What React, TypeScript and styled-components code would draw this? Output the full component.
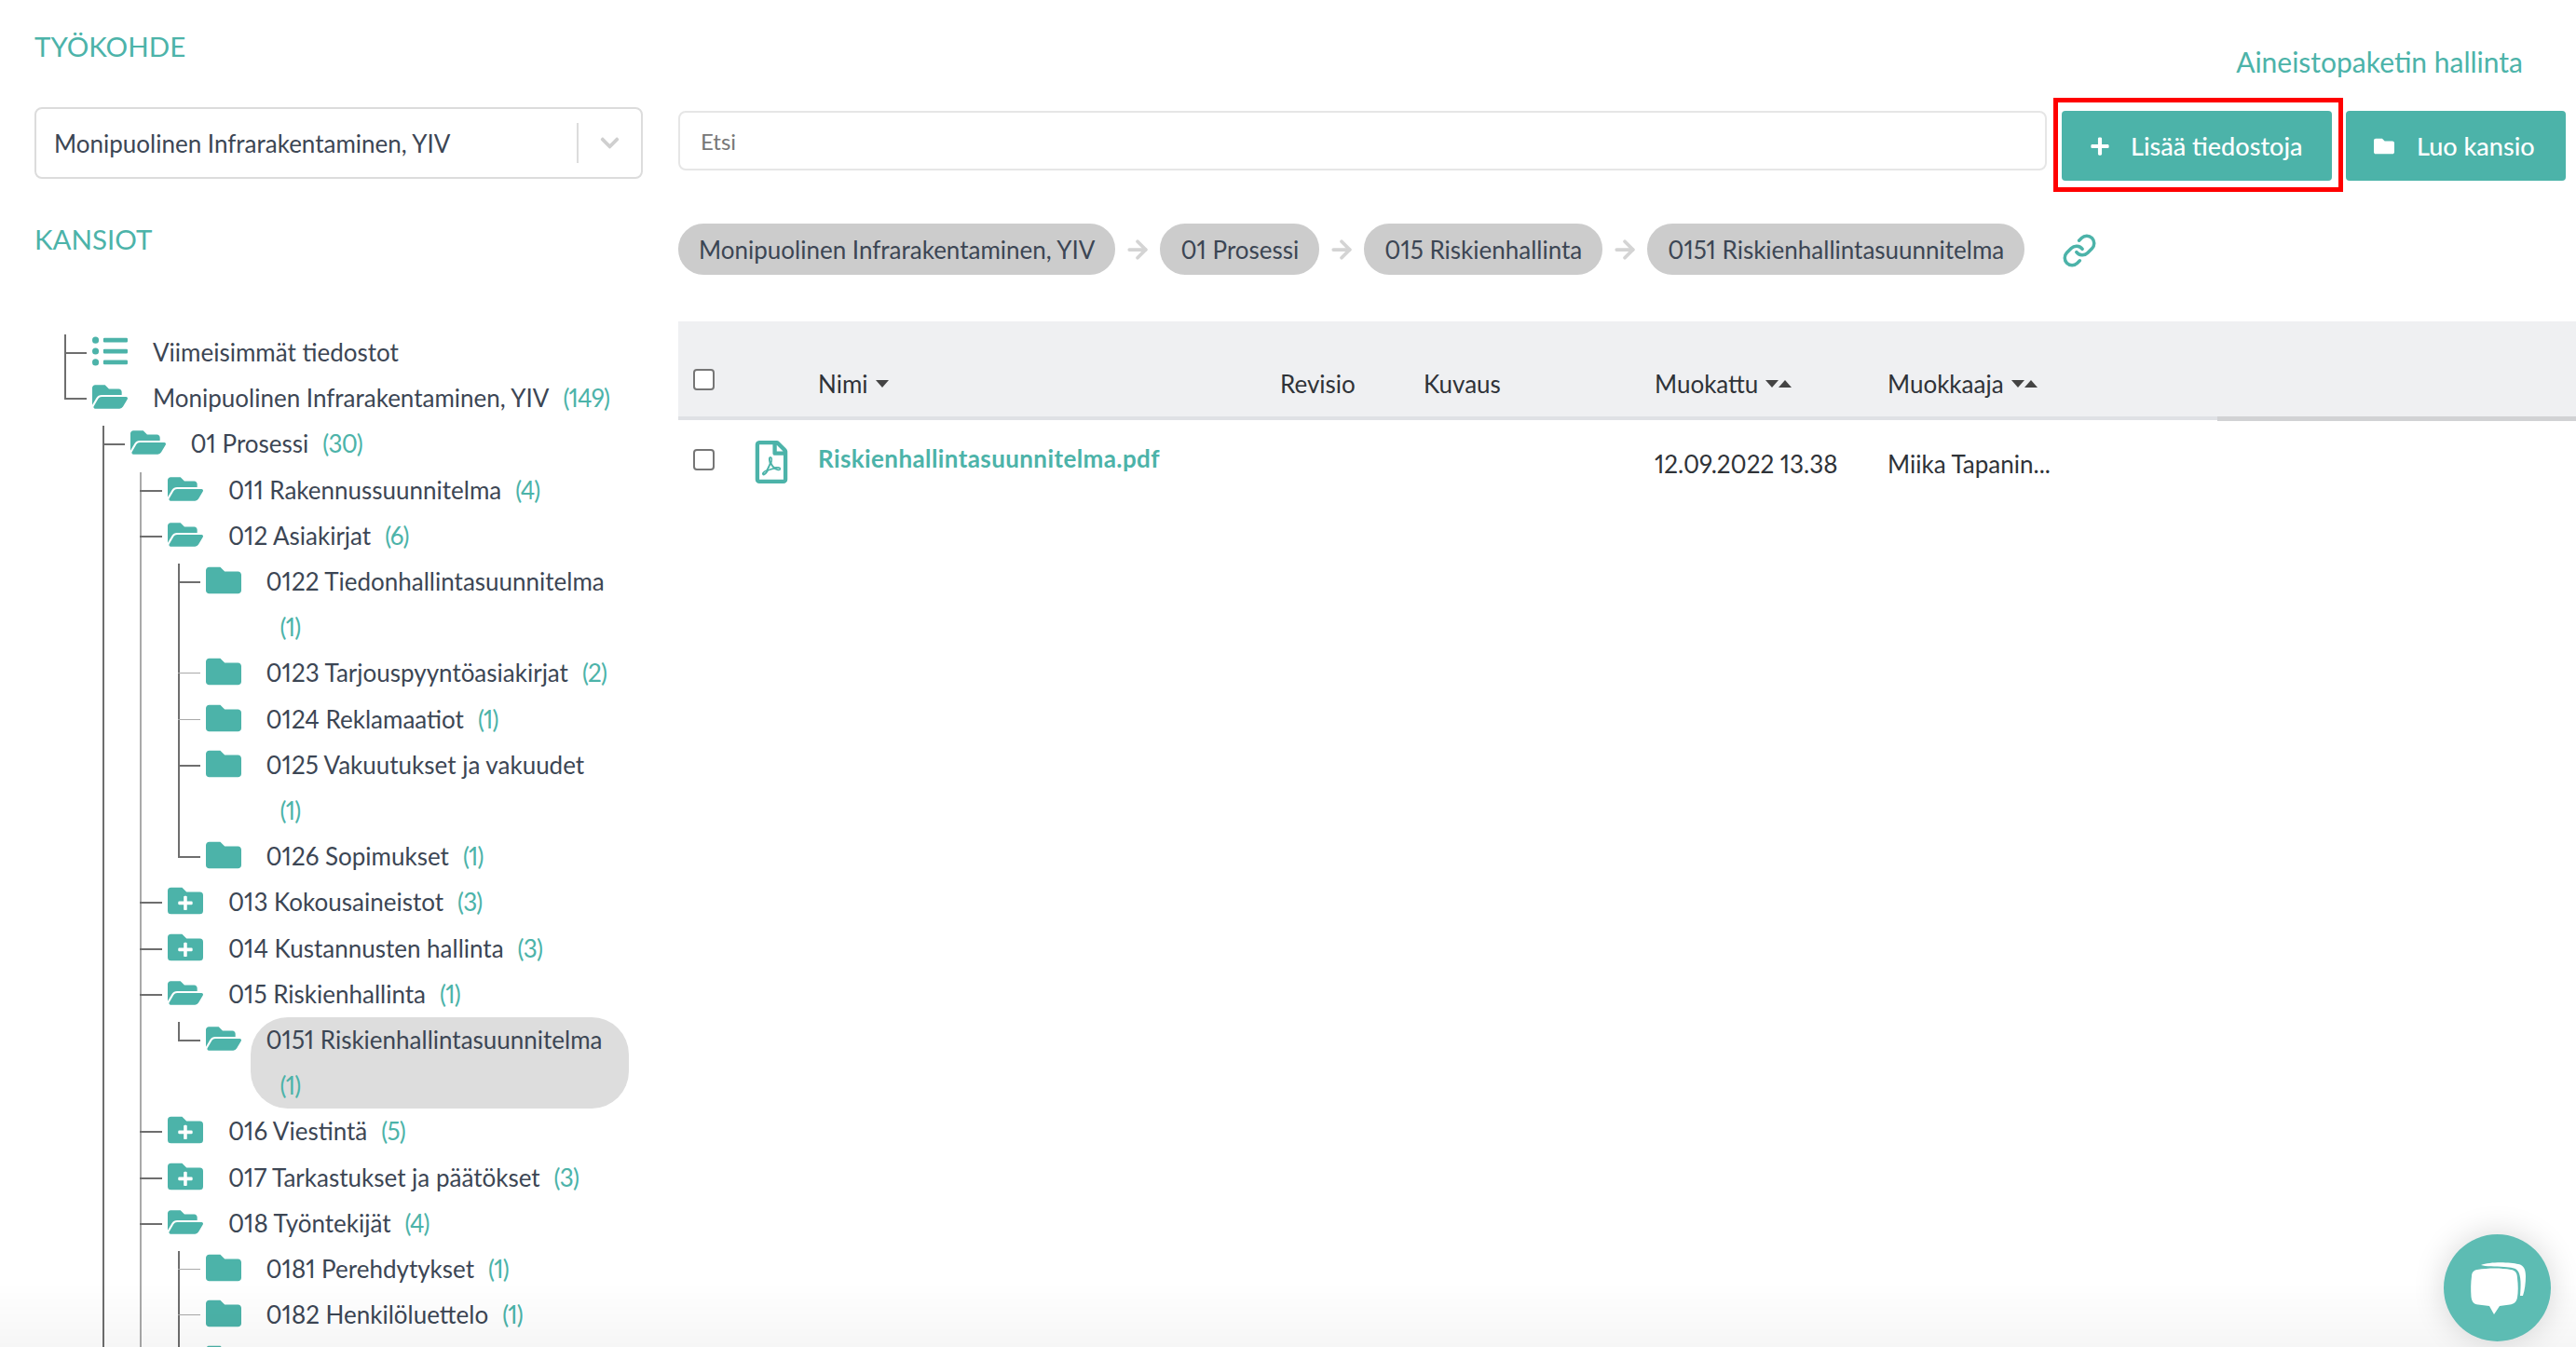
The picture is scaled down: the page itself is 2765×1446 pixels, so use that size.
import React from 'react'
import styled, { createGlobalStyle } from 'styled-components'
import { FaChevronDown, FaFolder, FaFolderOpen, FaFolderPlus, FaListUl, FaPlus, FaRegFilePdf } from 'react-icons/fa'
import { ArrowRight, Link } from 'lucide-react'

const Teal = '#4cb3a9'
const Ink = '#3c4654'

type IconKind = 'list' | 'open' | 'closed' | 'plus'

interface ITreeNode {
    icon: IconKind
    label?: string
    count?: number
    selected?: boolean
    thin?: boolean
    // the vertical line stops at this row; rows cut off by the window keep it going
    end?: boolean
    children?: ITreeNode[]
}

const tree: ITreeNode[] = [
    { icon: 'list', label: 'Viimeisimmät tiedostot' },
    {
        icon: 'open', label: 'Monipuolinen Infrarakentaminen, YIV', count: 149, end: true,
        children: [
            {
                icon: 'open', label: '01 Prosessi', count: 30,
                children: [
                    { icon: 'open', label: '011 Rakennussuunnitelma', count: 4 },
                    {
                        icon: 'open', label: '012 Asiakirjat', count: 6,
                        children: [
                            { icon: 'closed', label: '0122 Tiedonhallintasuunnitelma', count: 1 },
                            { icon: 'closed', label: '0123 Tarjouspyyntöasiakirjat', count: 2, thin: true },
                            { icon: 'closed', label: '0124 Reklamaatiot', count: 1, thin: true },
                            { icon: 'closed', label: '0125 Vakuutukset ja vakuudet', count: 1 },
                            { icon: 'closed', label: '0126 Sopimukset', count: 1, end: true },
                        ],
                    },
                    { icon: 'plus', label: '013 Kokousaineistot', count: 3 },
                    { icon: 'plus', label: '014 Kustannusten hallinta', count: 3 },
                    {
                        icon: 'open', label: '015 Riskienhallinta', count: 1,
                        children: [
                            { icon: 'open', label: '0151 Riskienhallintasuunnitelma', count: 1, selected: true, end: true },
                        ],
                    },
                    { icon: 'plus', label: '016 Viestintä', count: 5 },
                    { icon: 'plus', label: '017 Tarkastukset ja päätökset', count: 3 },
                    {
                        icon: 'open', label: '018 Työntekijät', count: 4,
                        children: [
                            { icon: 'closed', label: '0181 Perehdytykset', count: 1, thin: true },
                            { icon: 'closed', label: '0182 Henkilöluettelo', count: 1, thin: true },
                            { icon: 'closed' },
                        ],
                    },
                ],
            },
        ],
    },
]

const crumbs = [
    'Monipuolinen Infrarakentaminen, YIV',
    '01 Prosessi',
    '015 Riskienhallinta',
    '0151 Riskienhallintasuunnitelma',
]

const GlobalStyle = createGlobalStyle`
    html, body {
        margin: 0;
        height: 100%;
        overflow: hidden;
        background: #fff;
        font-family: "Lato", "Open Sans", sans-serif;
        font-variant-numeric: proportional-nums;
        color: ${Ink};
    }
    * {
        box-sizing: border-box;
    }
`

const Page = styled.div`
    display: flex;
    height: 100vh;
    overflow: hidden;
`

const Sidebar = styled.aside`
    flex: 0 0 728px;
    padding: 30px 0 0 37px;
`

const SectionTitle = styled.h2`
    margin: 0;
    height: 40px;
    font-size: 29.5px;
    line-height: 40px;
    font-weight: 400;
    color: ${Teal};
`

const Select = styled.div`
    display: flex;
    align-items: center;
    width: 653px;
    height: 77px;
    margin: 45px 0 45px;
    padding-left: 19px;
    border: 2px solid #dcdcdc;
    border-radius: 8px;
    font-size: 26px;
`

const SelectValue = styled.span`
    flex: 1;
`

const SelectArrow = styled.span`
    display: flex;
    align-items: center;
    justify-content: center;
    width: 69px;
    height: 43px;
    border-left: 2px solid #dcdcdc;
    color: #cfcfcf;
    font-size: 23px;
`

const Tree = styled.ul`
    list-style: none;
    width: 606px;
    margin: 77px 0 0 32px;
    padding: 0;
`

const SubTree = styled.ul`
    list-style: none;
    margin: 0;
    padding: 0 0 0 40.5px;
`

const TreeItem = styled.li<{ $depth: number, $thin?: boolean, $end?: boolean }>`
    position: relative;

    &::before {
        content: '';
        position: absolute;
        left: 0;
        top: 0;
        bottom: ${(props) => props.$end ? 'calc(100% - 25px)' : '0'};
        width: 2px;
        background: ${(props) => props.$depth === 2 ? '#a9a9a9' : '#6e6e6e'};
    }
    &:first-child::before {
        top: 5px;
    }
    &::after {
        content: '';
        position: absolute;
        left: 0;
        top: 24px;
        width: 24px;
        height: ${(props) => props.$thin ? '1px' : '2px'};
        background: ${(props) => props.$thin ? '#a9a9a9' : '#6e6e6e'};
    }
`

const TreeRow = styled.div`
    display: flex;
    padding-left: 30px;
`

const TreeIcon = styled.span`
    display: flex;
    flex: 0 0 48px;
    align-items: center;
    height: 46px;
    color: ${Teal};
    font-size: 38px;
    svg {
        display: block;
    }
`

const TreeLabel = styled.div<{ $selected?: boolean }>`
    flex: 1;
    padding: 0 15px 0 17px;
    font-size: 26px;
    line-height: 49.2px;
    border-radius: 40px;
    background: ${(props) => props.$selected ? '#dddddd' : 'transparent'};
`

const Count = styled.span`
    display: inline-block;
    margin-left: 15px;
    color: ${Teal};
    letter-spacing: -0.8px;
    white-space: nowrap;
`

const Main = styled.main`
    flex: 1;
    min-width: 0;
    padding-top: 46px;
`

const ManageLink = styled.a`
    display: block;
    margin-right: 57px;
    font-size: 30px;
    line-height: 40px;
    text-align: right;
    color: ${Teal};
`

const Toolbar = styled.div`
    display: flex;
    align-items: flex-start;
    gap: 15px;
    margin-top: 33px;
    padding-right: 11px;
`

const SearchInput = styled.input`
    flex: 1;
    min-width: 0;
    height: 64px;
    margin-right: 1px;
    padding: 0 22px;
    border: 2px solid #e6e6e6;
    border-radius: 8px;
    font-family: inherit;
    font-size: 24px;
    color: ${Ink};
    outline: none;
    &::placeholder {
        color: #777;
        opacity: 1;
    }
`

const Highlighted = styled.div`
    position: relative;
    &::after {
        content: '';
        position: absolute;
        inset: -14px -12px -12px -9px;
        border: 5px solid #ff0000;
        pointer-events: none;
    }
`

const ActionButton = styled.button<{ $width: number, $gap: number }>`
    display: flex;
    align-items: center;
    gap: ${(props) => props.$gap}px;
    width: ${(props) => props.$width}px;
    height: 75px;
    padding: 0 0 0 30px;
    border: 0;
    border-radius: 4px;
    background: ${Teal};
    color: #fff;
    font-family: inherit;
    font-size: 27px;
    font-weight: 500;
    svg {
        flex: none;
        font-size: 22px;
    }
`

const Breadcrumbs = styled.nav`
    display: flex;
    align-items: center;
    margin-top: 46px;
`

const Crumb = styled.span`
    display: flex;
    align-items: center;
    height: 55px;
    padding: 0 22px;
    border-radius: 27px;
    background: #cccccc;
    font-size: 26px;
    white-space: nowrap;
`

const CrumbArrow = styled.span`
    display: flex;
    justify-content: center;
    width: 48px;
    color: #d4d4d4;
`

const CrumbLink = styled.span`
    display: flex;
    margin: 2px 0 0 40px;
    color: ${Teal};
`

const Columns = `
    display: grid;
    grid-template-columns: 83px 67px 496px 154px 248px 250px 1fr;
    font-size: 26px;
    line-height: 40px;
    color: #2f3338;
`

const TableHead = styled.div`
    ${Columns}
    position: relative;
    height: 106px;
    margin-top: 50px;
    padding-top: 47px;
    align-items: center;
    align-content: start;
    background: #eff0f2;
    border-bottom: 4px solid #dfe1e5;

    &::after {
        content: '';
        position: absolute;
        right: 0;
        bottom: -5px;
        width: 385px;
        height: 5px;
        background: #d1d2d4;
    }
`

const TableRow = styled.div`
    ${Columns}
    align-items: start;
`

const HeadCell = styled.div`
    display: flex;
    align-items: center;
`

const Checkbox = styled.input.attrs({ type: 'checkbox' })<{ $top?: number, $bottom?: number }>`
    appearance: none;
    display: block;
    width: 23px;
    height: 23px;
    margin: ${(props) => props.$top || 0}px 0 ${(props) => props.$bottom || 0}px 16px;
    border: 2px solid #767676;
    border-radius: 4px;
    background: #fff;
`

const Caret = styled.span<{ $up?: boolean }>`
    width: 0;
    height: 0;
    border-left: 7.5px solid transparent;
    border-right: 7.5px solid transparent;
    border-top: ${(props) => props.$up ? '0' : '8px solid #444'};
    border-bottom: ${(props) => props.$up ? '8px solid #444' : '0'};
    &:first-of-type {
        margin-left: 8px;
    }
`

const FileIcon = styled.span`
    display: block;
    margin: 22px 0 0 -6px;
    color: ${Teal};
    font-size: 46px;
    line-height: 0;
`

const FileLink = styled.a`
    margin-top: 21px;
    font-weight: 700;
    letter-spacing: 0.4px;
    color: ${Teal};
    white-space: nowrap;
`

const Cell = styled.div`
    margin-top: 27px;
    white-space: nowrap;
`

const ChatButton = styled.button`
    position: fixed;
    right: 27px;
    bottom: 6px;
    width: 115px;
    height: 115px;
    padding: 0;
    border: 0;
    border-radius: 50%;
    background: #5dbcb3;
    box-shadow: 0 0 34px rgba(0, 0, 0, 0.16);
    z-index: 2;
`

const BottomFade = styled.div`
    position: fixed;
    left: 0;
    right: 0;
    bottom: 0;
    height: 70px;
    background: linear-gradient(rgba(0, 0, 0, 0), rgba(0, 0, 0, 0.035));
    pointer-events: none;
    z-index: 1;
`

const icons: Record<IconKind, React.ReactNode> = {
    list: <FaListUl />,
    open: <FaFolderOpen />,
    closed: <FaFolder />,
    plus: <FaFolderPlus />,
}

const TreeNode: React.FC<{ node: ITreeNode, depth: number }> = ({ node, depth }) => (
    <TreeItem $depth={depth} $thin={node.thin} $end={node.end}>
        <TreeRow>
            <TreeIcon>{icons[node.icon]}</TreeIcon>
            <TreeLabel $selected={node.selected}>
                {node.label}
                {node.count !== undefined && <Count>({node.count})</Count>}
            </TreeLabel>
        </TreeRow>
        {node.children && (
            <SubTree>
                {node.children.map((child, i) => <TreeNode key={i} node={child} depth={depth + 1} />)}
            </SubTree>
        )}
    </TreeItem>
)

const App: React.FC = () => {
    return (
        <Page>
            <GlobalStyle />
            <Sidebar>
                <SectionTitle>TYÖKOHDE</SectionTitle>
                <Select>
                    <SelectValue>Monipuolinen Infrarakentaminen, YIV</SelectValue>
                    <SelectArrow><FaChevronDown /></SelectArrow>
                </Select>
                <SectionTitle>KANSIOT</SectionTitle>
                <Tree>
                    {tree.map((node, i) => <TreeNode key={i} node={node} depth={0} />)}
                </Tree>
            </Sidebar>
            <Main>
                <ManageLink>Aineistopaketin hallinta</ManageLink>
                <Toolbar>
                    <SearchInput placeholder="Etsi" />
                    <Highlighted>
                        <ActionButton $width={290} $gap={22}><FaPlus />Lisää tiedostoja</ActionButton>
                    </Highlighted>
                    <ActionButton $width={236} $gap={24}><FaFolder />Luo kansio</ActionButton>
                </Toolbar>
                <Breadcrumbs>
                    {crumbs.map((crumb, i) => (
                        <React.Fragment key={crumb}>
                            {i > 0 && <CrumbArrow><ArrowRight size={30} strokeWidth={3} /></CrumbArrow>}
                            <Crumb>{crumb}</Crumb>
                        </React.Fragment>
                    ))}
                    <CrumbLink><Link size={38} strokeWidth={2.2} /></CrumbLink>
                </Breadcrumbs>
                <TableHead>
                    <Checkbox $bottom={9} />
                    <span />
                    <HeadCell>Nimi<Caret /></HeadCell>
                    <HeadCell>Revisio</HeadCell>
                    <HeadCell>Kuvaus</HeadCell>
                    <HeadCell>Muokattu<Caret /><Caret $up /></HeadCell>
                    <HeadCell>Muokkaaja<Caret /><Caret $up /></HeadCell>
                </TableHead>
                <TableRow>
                    <Checkbox $top={31} />
                    <FileIcon><FaRegFilePdf /></FileIcon>
                    <FileLink>Riskienhallintasuunnitelma.pdf</FileLink>
                    <span />
                    <span />
                    <Cell>12.09.2022 13.38</Cell>
                    <Cell>Miika Tapanin...</Cell>
                </TableRow>
            </Main>
            <BottomFade />
            <ChatButton>
                <svg width="115" height="115" viewBox="0 0 115 115">
                    <path fill="#fff" d="M40 33C50 29 72 30 80 32C86 33 88 38 88 45C88 52 87 60 85 66L82 66C83 55 83 45 80 40C78 36 72 35.5 65 35C55 34.5 45 34.5 40 33Z" />
                    <path fill="#fff" d="M36 38C48 36 62 36 72 38C77 38.5 79 42 79 47C80 54 80 62 79 68C78 73 75 75 71 75.5L60 77L54 86L49 77L37 75.5C32 75 30 72 29.5 67C29 60 29 52 30 45C30 41 32 38.5 36 38Z" />
                </svg>
            </ChatButton>
        </Page>
    )
}

export default App
